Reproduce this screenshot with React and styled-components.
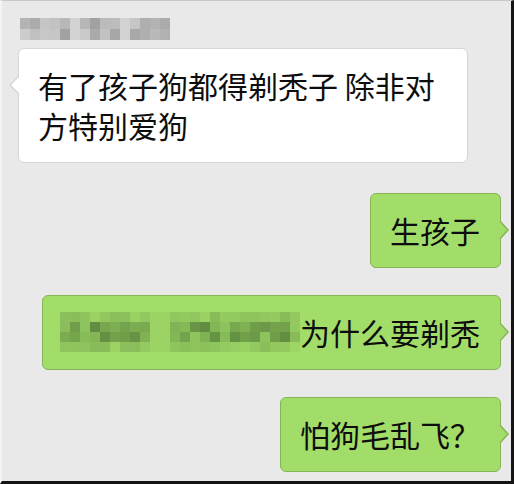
import React from 'react';
import styled, { createGlobalStyle, css } from 'styled-components';

const GlobalStyle = createGlobalStyle`
  html, body {
    margin: 0;
    padding: 0;
    background: #e9e9e9;
  }
`;

const Frame = styled.div`
  width: 514px;
  height: 484px;
  box-sizing: border-box;
  background: #e9e9e9;
  border-right: 3px solid #141414;
  border-bottom: 3px solid #141414;
  border-top: 1px solid #c9c9c9;
  border-left: 2px solid #f4f4f4;
  padding: 17px 10px 0 16px;
  display: flex;
  flex-direction: column;
  font-family: "Noto Sans CJK SC", "Noto Sans", sans-serif;
  overflow: hidden;
`;

const Row = styled.div`
  display: flex;
  justify-content: ${(p) => (p.$side === 'right' ? 'flex-end' : 'flex-start')};
  margin-top: ${(p) => p.$gap || 0}px;
`;

const Mosaic = styled.div`
  display: inline-grid;
  grid-template-columns: repeat(${(p) => p.$cols}, ${(p) => p.$cw}px);
  grid-auto-rows: ${(p) => p.$ch}px;
  vertical-align: top;
  margin-left: ${(p) => p.$ml || 0}px;
`;

const Cell = styled.span`
  display: block;
`;

const Bubble = styled.div`
  position: relative;
  max-width: 450px;
  box-sizing: border-box;
  padding: 16px 20px 17px 19px;
  border-radius: 6px;
  font-size: 30px;
  line-height: 40px;
  color: #0d0d0d;
  word-break: break-all;

  &::before,
  &::after {
    content: '';
    position: absolute;
    width: 0;
    height: 0;
    border-style: solid;
  }

  ${(p) =>
    p.$side === 'right'
      ? css`
          background: #a2dc69;
          border: 1px solid #86b557;
          &::before {
            right: -9px;
            top: 26px;
            border-width: 10px 0 10px 9px;
            border-color: transparent transparent transparent #86b557;
          }
          &::after {
            right: -7px;
            top: 27px;
            border-width: 9px 0 9px 8px;
            border-color: transparent transparent transparent #a2dc69;
          }
        `
      : css`
          background: #ffffff;
          border: 1px solid #d6d6d6;
          &::before {
            left: -10px;
            top: 26px;
            border-width: 10px 10px 10px 0;
            border-color: transparent #d6d6d6 transparent transparent;
          }
          &::after {
            left: -8px;
            top: 27px;
            border-width: 9px 9px 9px 0;
            border-color: transparent #ffffff transparent transparent;
          }
        `}
`;

const Wide = styled(Bubble)`
  max-width: 470px;
  padding-left: 17px;
  display: flex;
  align-items: flex-start;
`;

const seed = (i) => {
  const x = Math.sin(i * 12.9898 + 78.233) * 43758.5453;
  return x - Math.floor(x);
};

const buildCells = (cols, rows, offset, shade) => {
  const cells = [];
  for (let r = 0; r < rows; r++) {
    for (let c = 0; c < cols; c++) {
      const v = seed(offset + r * cols + c);
      cells.push(shade(v, r, c));
    }
  }
  return cells;
};

const headerCells = buildCells(15, 2, 3, (v, r, c) => {
  const gap = c === 5 || c === 10;
  const g = gap ? 210 : Math.round(160 + v * 45);
  return `rgb(${g},${g},${g})`;
});

const nameCells = buildCells(24, 4, 40, (v, r, c) => {
  const edge = r === 0 || r === 3;
  const blank = c === 9 || c === 10;
  let a = blank ? 0.05 : edge ? 0.06 + v * 0.16 : 0.14 + v * 0.4;
  if (c === 23) a = a * 0.6;
  return `rgba(40,70,30,${a.toFixed(2)})`;
});

const App = () => (
  <>
    <GlobalStyle />
    <Frame>
      <Row>
        <Mosaic $cols={15} $cw={10} $ch={11} $ml={2}>
          {headerCells.map((bg, i) => (
            <Cell key={i} style={{ background: bg }} />
          ))}
        </Mosaic>
      </Row>

      <Row $gap={8}>
        <Bubble>有了孩子狗都得剃秃子 除非对方特别爱狗</Bubble>
      </Row>

      <Row $side="right" $gap={30}>
        <Bubble $side="right">生孩子</Bubble>
      </Row>

      <Row $side="right" $gap={27}>
        <Wide $side="right">
          <Mosaic $cols={24} $cw={10} $ch={10}>
            {nameCells.map((bg, i) => (
              <Cell key={i} style={{ background: bg }} />
            ))}
          </Mosaic>
          <span>为什么要剃秃</span>
        </Wide>
      </Row>

      <Row $side="right" $gap={27}>
        <Bubble $side="right">怕狗毛乱飞？</Bubble>
      </Row>
    </Frame>
  </>
);

export default App;
